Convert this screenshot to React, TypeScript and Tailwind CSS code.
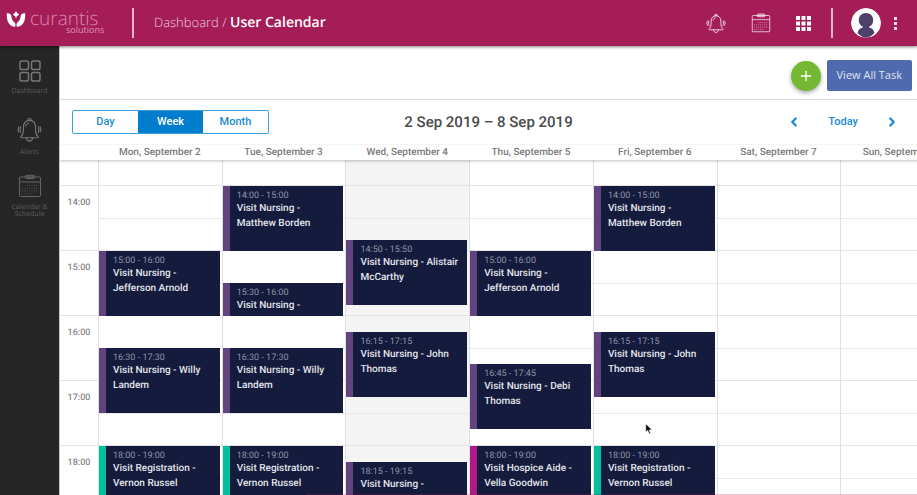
import React from 'react';
import { ChevronLeft, ChevronRight, Plus } from 'lucide-react';

const HOUR_HEIGHT = 65;
const TOP_OFFSET = 26;
const FIRST_HOUR = 14;
const HOURS = [14, 15, 16, 17, 18];

type Kind = 'nursing' | 'registration' | 'hospice';

interface Visit {
  start: string;
  end: string;
  title: string;
  kind: Kind;
}

interface Day {
  label: string;
  today?: boolean;
  visits: Visit[];
}

const STRIPES: Record<Kind, string> = {
  nursing: 'border-[#614380]',
  registration: 'border-[#00bf9f]',
  hospice: 'border-[#b01a86]',
};

const DAYS: Day[] = [
  {
    label: 'Mon, September 2',
    visits: [
      { start: '15:00', end: '16:00', title: 'Visit Nursing - Jefferson Arnold', kind: 'nursing' },
      { start: '16:30', end: '17:30', title: 'Visit Nursing - Willy Landem', kind: 'nursing' },
      { start: '18:00', end: '19:00', title: 'Visit Registration - Vernon Russel', kind: 'registration' },
    ],
  },
  {
    label: 'Tue, September 3',
    visits: [
      { start: '14:00', end: '15:00', title: 'Visit Nursing - Matthew Borden', kind: 'nursing' },
      { start: '15:30', end: '16:00', title: 'Visit Nursing -', kind: 'nursing' },
      { start: '16:30', end: '17:30', title: 'Visit Nursing - Willy Landem', kind: 'nursing' },
      { start: '18:00', end: '19:00', title: 'Visit Registration - Vernon Russel', kind: 'registration' },
    ],
  },
  {
    label: 'Wed, September 4',
    today: true,
    visits: [
      { start: '14:50', end: '15:50', title: 'Visit Nursing - Alistair McCarthy', kind: 'nursing' },
      { start: '16:15', end: '17:15', title: 'Visit Nursing - John Thomas', kind: 'nursing' },
      { start: '18:15', end: '19:15', title: 'Visit Nursing -', kind: 'nursing' },
    ],
  },
  {
    label: 'Thu, September 5',
    visits: [
      { start: '15:00', end: '16:00', title: 'Visit Nursing - Jefferson Arnold', kind: 'nursing' },
      { start: '16:45', end: '17:45', title: 'Visit Nursing - Debi Thomas', kind: 'nursing' },
      { start: '18:00', end: '19:00', title: 'Visit Hospice Aide - Vella Goodwin', kind: 'hospice' },
    ],
  },
  {
    label: 'Fri, September 6',
    visits: [
      { start: '14:00', end: '15:00', title: 'Visit Nursing - Matthew Borden', kind: 'nursing' },
      { start: '16:15', end: '17:15', title: 'Visit Nursing - John Thomas', kind: 'nursing' },
      { start: '18:00', end: '19:00', title: 'Visit Registration - Vernon Russel', kind: 'registration' },
    ],
  },
  { label: 'Sat, September 7', visits: [] },
  { label: 'Sun, September 8', visits: [] },
];

const toHours = (time: string) => {
  const [h, m] = time.split(':').map(Number);
  return h + m / 60;
};

const BellIcon = ({ className }: { className?: string }) => (
  <svg viewBox="0 0 26 28" className={className} fill="none" stroke="currentColor" strokeWidth="1.2" strokeLinecap="round" strokeLinejoin="round" aria-hidden="true">
    <path d="M11 4a2 2.400 0 0 1 4 0" />
    <path d="M13 3.600c-4 0-6.200 2.800-6.400 6.800l-.3 5.600c-.1 2.400-1 3.600-2.500 5-.6.6-.2 1.400.5 1.400h17.400c.7 0 1.100-.8.5-1.400-1.500-1.400-2.400-2.600-2.500-5l-.3-5.600c-.2-4-2.400-6.800-6.400-6.800z" />
    <path d="M9.200 9.600c.3-1.600 1.300-2.800 3-3.200" />
    <path d="M9.600 22.600c.4 2 1.700 3.400 3.400 3.400s3-1.400 3.400-3.400" />
    <path d="M3.600 10.400c-.9 1.900-.9 4.300 0 6.200M1.500 10.800c-.9 1.800-.9 3.600 0 5.400" />
    <path d="M22.400 10.400c.9 1.900.9 4.300 0 6.200M24.500 10.800c.9 1.800.9 3.600 0 5.400" />
  </svg>
);

const CalendarIcon = ({ className }: { className?: string }) => (
  <svg viewBox="0 0 24 24" className={className} fill="none" stroke="currentColor" strokeWidth="1" aria-hidden="true">
    <rect x="1.500" y="3" width="21" height="19.500" rx="1" />
    <path d="M1.500 8h21" />
    <rect x="7.200" y="1.300" width="9.600" height="3.200" rx="1.200" />
    <path d="M9.600 1.300v3.200M12 1.300v3.200M14.400 1.300v3.200" />
    <path d="M8.600 11.500h12M3.800 14.300h16.800M3.800 17h16.800M3.800 19.700h11" strokeWidth=".9" strokeDasharray="1.200 1.200" opacity=".7" />
  </svg>
);

const TilesIcon = () => (
  <svg viewBox="0 0 22 22" className="size-[22px]" fill="none" stroke="currentColor" strokeWidth="1.500" aria-hidden="true">
    <rect x="1" y="1" width="8.500" height="8.500" rx="1.800" />
    <rect x="12.500" y="1" width="8.500" height="8.500" rx="1.800" />
    <rect x="1" y="12.500" width="8.500" height="8.500" rx="1.800" />
    <rect x="12.500" y="12.500" width="8.500" height="8.500" rx="1.800" />
  </svg>
);

const AppsIcon = () => (
  <svg viewBox="0 0 15 15" className="size-[15px]" fill="currentColor" aria-hidden="true">
    {[0, 5.5, 11].map((y) => [0, 5.5, 11].map((x) => <rect key={`${x}-${y}`} x={x} y={y} width="4" height="4" />))}
  </svg>
);

const LogoMark = () => (
  <svg viewBox="0 0 20 17" className="h-[17px] w-5" fill="#fff" aria-hidden="true">
    <path d="M10 .5c.5 1.500 1.300 2.200 3 3-1.700.7-2.500 1.500-3 3-.5-1.500-1.300-2.300-3-3 1.700-.8 2.500-1.500 3-3z" strokeWidth=".8" stroke="#fff" />
    <path d="M.8 2.300C3 2 4.600 2.600 5.200 4.600c.4 3 1.300 5.700 3.900 7.400.5 1.300.5 2.600-.1 4C4 15.600.2 11.200.8 2.300z" />
    <path d="M19.200 2.300c-2.200-.3-3.800.3-4.400 2.300-.4 3-1.300 5.700-3.900 7.400-.5 1.300-.5 2.600.1 4 5-.4 8.800-4.800 8.200-13.700z" />
  </svg>
);

const Avatar = () => (
  <svg viewBox="0 0 30 30" className="size-[30px] rounded-full" aria-hidden="true">
    <circle cx="15" cy="15" r="15" fill="#fff" />
    <path d="M15 5c4.300 0 7.200 3 7.200 7.200 0 3.500-1.600 5.300-4 6.400v.8c3.200.6 4.800 2.600 5.200 5.600A15 15 0 0 1 15 30a15 15 0 0 1-8.400-5c.4-3 2-5 5.200-5.600v-.8c-2.400-1.100-4-2.900-4-6.400C7.800 8 10.700 5 15 5z" fill="#4f4069" />
  </svg>
);

const Header = () => (
  <header className="relative z-20 flex h-[46px] shrink-0 items-center bg-[#a51d57] pr-3 pl-1.5 text-white shadow-[0_1px_3px_rgba(0,0,0,0.5)]">
    <a href="#home" className="flex w-[126px] items-start gap-1">
      <LogoMark />
      <span className="flex flex-col font-['Open_Sans',sans-serif]">
        <span className="text-[19px] leading-[14px] font-light text-[#d987a8]">curantis</span>
        <span className="pl-9 text-[9px] leading-[10px] text-[#dd94b2]">solutions</span>
      </span>
    </a>
    <span className="h-[30px] w-0.5 bg-[#e3b4c8]" />
    <nav aria-label="Breadcrumb" className="flex-1 pl-5 font-['Open_Sans',sans-serif] text-sm">
      <span className="text-[13px] font-light text-[#eccbd8]">
        <a href="#dashboard">Dashboard</a>
        {' / '}
      </span>
      <span className="font-semibold">User Calendar</span>
    </nav>
    <div className="flex items-center text-[#f3dbe5]">
      <button type="button" aria-label="Notifications" className="mr-[25px]">
        <BellIcon className="h-[21px] w-5" />
      </button>
      <button type="button" aria-label="Calendar" className="mr-[25px]">
        <CalendarIcon className="size-5" />
      </button>
      <button type="button" aria-label="Apps" className="mr-5 text-white">
        <AppsIcon />
      </button>
      <span className="mr-[18px] h-[30px] w-0.5 bg-[#e3b4c8]" />
      <button type="button" aria-label="Account" className="mr-3">
        <Avatar />
      </button>
      <button type="button" aria-label="More options" className="flex w-3 flex-col items-start gap-0.5 pl-px">
        <span className="size-[3px] bg-[#f3dbe5]" />
        <span className="size-[3px] bg-[#f3dbe5]" />
        <span className="size-[3px] bg-[#f3dbe5]" />
      </button>
    </div>
  </header>
);

const Sidebar = () => (
  <nav aria-label="Main" className="flex w-[59px] shrink-0 flex-col items-center bg-[#262626] pt-3.5 text-center font-['Open_Sans',sans-serif] text-[7px] leading-[7px]">
    <a href="#dashboard" className="flex flex-col items-center gap-1.5 text-[#777777]">
      <TilesIcon />
      <span className="text-[#5c5c5c]">Dashboard</span>
    </a>
    <a href="#alerts" className="mt-[22px] flex flex-col items-center gap-1.5 text-[#777777]">
      <BellIcon className="h-[26px] w-[25px]" />
      <span className="text-[#5c5c5c]">Alerts</span>
    </a>
    <a href="#calendar" className="mt-[18px] flex flex-col items-center gap-1.5 text-[#666666]">
      <CalendarIcon className="size-6" />
      <span className="text-[#5c5c5c]">
        Calendar &amp;
        <br />
        Schedule
      </span>
    </a>
  </nav>
);

const CalendarToolbar = () => (
  <div className="grid h-[44px] grid-cols-3 items-center px-3 text-[11px] font-medium text-[#1a8ad4]">
    <div className="flex h-6 w-[197px] overflow-hidden rounded-xs border border-[#3ba0de]">
      <button type="button" className="flex-1">Day</button>
      <button type="button" aria-pressed="true" className="flex-1 bg-[#007dcc] text-white">Week</button>
      <button type="button" className="flex-1">Month</button>
    </div>
    <h1 className="text-center text-[15px] font-medium whitespace-nowrap text-[#4a4a4a]">2 Sep 2019 – 8 Sep 2019</h1>
    <div className="flex items-center justify-end gap-[27px] pr-1.5">
      <button type="button" aria-label="Previous week">
        <ChevronLeft size={14} strokeWidth={4} aria-hidden="true" />
      </button>
      <button type="button">Today</button>
      <button type="button" aria-label="Next week">
        <ChevronRight size={14} strokeWidth={4} aria-hidden="true" />
      </button>
    </div>
  </div>
);

const VisitCard = ({ visit }: { visit: Visit }) => {
  const start = toHours(visit.start);
  const top = TOP_OFFSET + (start - FIRST_HOUR) * HOUR_HEIGHT;
  const height = (toHours(visit.end) - start) * HOUR_HEIGHT;

  return (
    <div
      className={`absolute right-0.5 left-0 overflow-hidden border-l-[7px] bg-[#151b3d] pt-1.5 pr-1 pl-[7px] ${STRIPES[visit.kind]}`}
      style={{ top: Math.floor(top), height: Math.round(height) }}
    >
      <div className="text-[9px] leading-[9px] text-[#9093a8]">{visit.start} - {visit.end}</div>
      <div className="text-[10px] leading-[15px] font-medium text-[#e4e5ec]">{visit.title}</div>
    </div>
  );
};

const WeekGrid = () => (
  <div className="flex min-h-0 flex-1 flex-col overflow-hidden">
    {/* Day names */}
    <div className="relative z-10 flex h-4 w-full min-w-[904px] shrink-0 border-t border-[#f5f5f5] bg-white pl-[38px] shadow-[0_1px_3px_rgba(0,0,0,0.25)]">
      {DAYS.map((day) => (
        <div key={day.label} className="flex-1 text-center text-[10px] leading-[16px] font-medium text-[#7b7b7b]">{day.label}</div>
      ))}
    </div>

    {/* Hours and visits */}
    <div className="flex w-full min-w-[904px]">
      <div className="w-[38px] shrink-0">
        <div className="h-[26px] border-b border-[#e4e4e4]" />
        {HOURS.map((hour) => (
          <div key={hour} className="h-[65px] border-b border-[#e4e4e4] pt-2.5 text-center text-[9px] leading-[14px] font-medium text-[#858585]">
            {hour}:00
          </div>
        ))}
      </div>
      {DAYS.map((day) => (
        <div key={day.label} className={`relative flex-1 border-l border-[#e0e0e0] ${day.today ? 'bg-[#f4f4f4]' : ''}`}>
          <div className="h-[26px] border-b border-[#e4e4e4]" />
          {HOURS.map((hour) => (
            <div key={hour} className="h-[65px] border-b border-[#e4e4e4]">
              <div className="h-[33px] border-b border-[#e8e8e8]" />
            </div>
          ))}
          {day.visits.map((visit) => (
            <VisitCard key={visit.start} visit={visit} />
          ))}
        </div>
      ))}
    </div>
  </div>
);

// mouse pointer over the free slot on Friday
const Pointer = () => (
  <svg viewBox="0 0 12 18" className="pointer-events-none absolute top-[423px] left-[645px] z-30 h-3 w-2" aria-hidden="true">
    <path d="M1 1v13l3-2.800 2.200 5 2.300-1-2.200-4.800H11z" fill="#111" stroke="#fff" strokeWidth="1" />
  </svg>
);

export default function App() {
  return (
    <div className="relative flex h-screen flex-col overflow-hidden bg-white font-[Roboto,sans-serif] [text-rendering:geometricPrecision]">
      <Header />
      <div className="flex min-h-0 flex-1">
        <Sidebar />
        <main className="flex min-w-0 flex-1 flex-col border-l border-[#c8c8c8]">
          <div className="flex h-[54px] shrink-0 items-center justify-end gap-1.5 border-b border-[#d8d8d8] pt-1.5 pr-[5px]">
            <button type="button" aria-label="Add task" className="flex size-[30px] items-center justify-center rounded-full bg-[#75b832] text-white shadow-[0_2px_4px_rgba(0,0,0,0.35)]">
              <Plus size={16} strokeWidth={2} aria-hidden="true" />
            </button>
            <button type="button" className="h-[31px] rounded-xs bg-[#4f6aae] px-2.5 font-['Open_Sans',sans-serif] text-[11px] text-[#dfe5f3]">
              View All Task
            </button>
          </div>
          <CalendarToolbar />
          <WeekGrid />
        </main>
      </div>
      {/* Bottom edge accent */}
      <div className="absolute right-0 bottom-0 left-1/3 h-px bg-[#a51d57]/25" />
      <Pointer />
    </div>
  );
}
